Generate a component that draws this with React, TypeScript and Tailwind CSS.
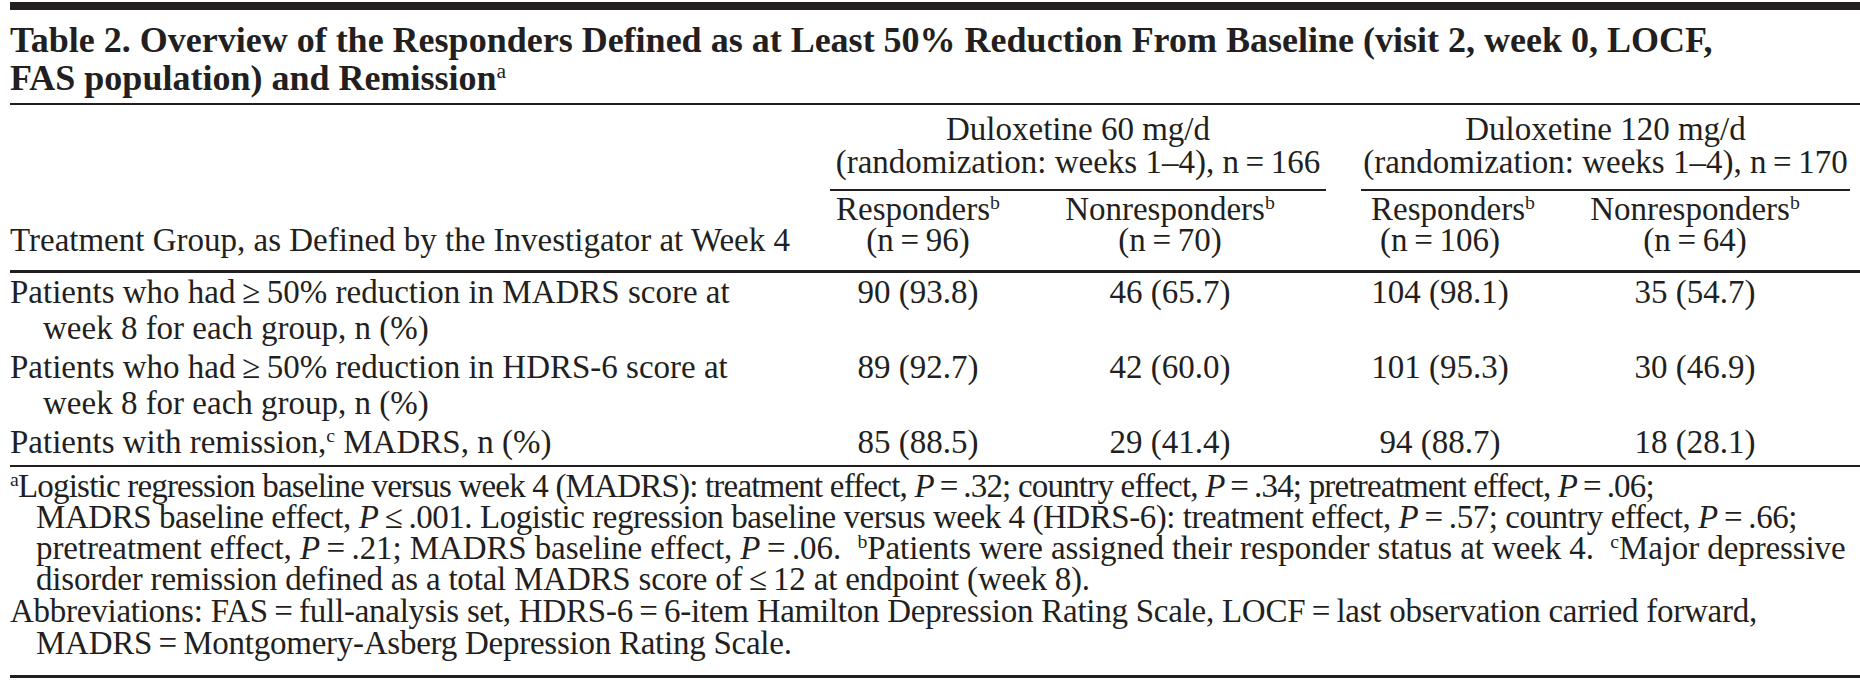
import React from 'react';

const TS = '\u2009';

interface Row {
  label: string[];
  sup?: string;
  values: string[];
}

const rows: Row[] = [
  {
    label: [`Patients who had${TS}≥${TS}50% reduction in MADRS score at`, 'week 8 for each group, n (%)'],
    values: ['90 (93.8)', '46 (65.7)', '104 (98.1)', '35 (54.7)'],
  },
  {
    label: [`Patients who had${TS}≥${TS}50% reduction in HDRS-6 score at`, 'week 8 for each group, n (%)'],
    values: ['89 (92.7)', '42 (60.0)', '101 (95.3)', '30 (46.9)'],
  },
  {
    label: ['Patients with remission,'],
    sup: 'c',
    values: ['85 (88.5)', '29 (41.4)', '94 (88.7)', '18 (28.1)'],
  },
];

const Sup: React.FC<{ children: React.ReactNode }> = ({ children }) => (
  <span className="relative -top-[0.55em] text-[0.6em] font-normal leading-none">{children}</span>
);

const Eq = () => <span>{TS}={TS}</span>;

const P: React.FC<{ v: string; op?: string }> = ({ v, op = '=' }) => (
  <>
    <i>P</i>
    {TS}{op}{TS}{v}
  </>
);

// label | resp 60 | nonresp 60 | gap | resp 120 | nonresp 120
const grid = 'grid grid-cols-[820px_180px_320px_31px_148px_351px]';

const App: React.FC = () => {
  return (
    <div
      className="w-[1860px] h-[700px] bg-white pl-[10px] text-[#231f20] overflow-hidden"
      style={{ fontFamily: '"Liberation Serif", "Times New Roman", serif' }}
    >
      {/* top rule */}
      <div className="mt-[2px] h-[8px] bg-[#231f20]" />

      {/* title */}
      <div className="pt-[11px] pb-[6px] text-[36px] leading-[38px] font-bold">
        <div>Table 2. Overview of the Responders Defined as at Least 50% Reduction From Baseline (visit 2, week 0, LOCF,</div>
        <div>
          FAS population) and Remission<Sup>a</Sup>
        </div>
      </div>
      <div className="h-[2px] bg-[#231f20]" />

      <div className="text-[33px]">
        {/* group header */}
        <div className={`${grid} pt-[8px] leading-[33px]`}>
          <div />
          <div className="col-span-2 text-center pr-[4px]">
            <div>Duloxetine 60 mg/d</div>
            <div>
              (randomization: weeks 1–4), n<Eq />166
            </div>
            <div className="mt-[10px] h-[2px] bg-[#231f20]" />
          </div>
          <div />
          <div className="col-span-2 text-center pr-[10px]">
            <div>Duloxetine 120 mg/d</div>
            <div>
              (randomization: weeks 1–4), n<Eq />170
            </div>
            <div className="mt-[10px] h-[2px] bg-[#231f20]" />
          </div>
        </div>

        {/* column header */}
        <div className={`${grid} pt-[3px] pb-[14px] leading-[31px]`}>
          <div className="flex items-end">Treatment Group, as Defined by the Investigator at Week 4</div>
          <div className="text-center pr-[4px]">
            <div>Responders<Sup>b</Sup></div>
            <div>(n<Eq />96)</div>
          </div>
          <div className="text-center">
            <div>Nonresponders<Sup>b</Sup></div>
            <div>(n<Eq />70)</div>
          </div>
          <div />
          <div className="text-center pl-[10px]">
            <div>Responders<Sup>b</Sup></div>
            <div>(n<Eq />106)</div>
          </div>
          <div className="text-center pl-[21px]">
            <div>Nonresponders<Sup>b</Sup></div>
            <div>(n<Eq />64)</div>
          </div>
        </div>
        <div className="h-[3px] bg-[#231f20]" />

        {/* body */}
        <div className="pt-[1px] pb-[5px] leading-[36px]">
          {rows.map((row, i) => (
            <div key={i} className={`${grid} ${i < rows.length - 1 ? 'pb-[3px]' : ''}`}>
              <div>
                {row.label.map((line, j) => (
                  <div key={j} className={j > 0 ? 'pl-[33px]' : ''}>
                    {line}
                    {row.sup && (
                      <>
                        <Sup>{row.sup}</Sup> MADRS, n (%)
                      </>
                    )}
                  </div>
                ))}
              </div>
              <div className="text-center pr-[4px]">{row.values[0]}</div>
              <div className="text-center">{row.values[1]}</div>
              <div />
              <div className="text-center pl-[10px]">{row.values[2]}</div>
              <div className="text-center pl-[21px]">{row.values[3]}</div>
            </div>
          ))}
        </div>
        <div className="h-[2px] bg-[#231f20]" />

        {/* footnotes */}
        <div className="pt-[4px] leading-[31px] whitespace-nowrap">
          <div className="tracking-[-0.8px]">
            <Sup>a</Sup>Logistic regression baseline versus week 4 (MADRS): treatment effect, <P v=".32" />; country effect, <P v=".34" />; pretreatment effect, <P v=".06" />;
          </div>
          <div className="pl-[26px] tracking-[-0.45px]">
            MADRS baseline effect, <P v=".001" op="≤" />. Logistic regression baseline versus week 4 (HDRS-6): treatment effect, <P v=".57" />; country effect, <P v=".66" />;
          </div>
          <div className="pl-[26px] tracking-[-0.1px]">
            pretreatment effect, <P v=".21" />; MADRS baseline effect, <P v=".06" />.{'\u2002'}<Sup>b</Sup>Patients were assigned their responder status at week 4.{'\u2002'}<Sup>c</Sup>Major depressive
          </div>
          <div className="pl-[26px] tracking-[-0.2px]">
            disorder remission defined as a total MADRS score of{TS}≤{TS}12 at endpoint (week 8).
          </div>
          <div className="pt-[1px] tracking-[-0.25px]">
            Abbreviations: FAS<Eq />full-analysis set, HDRS-6<Eq />6-item Hamilton Depression Rating Scale, LOCF<Eq />last observation carried forward,
          </div>
          <div className="pt-[1px] pl-[26px] tracking-[-0.25px]">
            MADRS<Eq />Montgomery-Asberg Depression Rating Scale.
          </div>
        </div>
        <div className="mt-[16px] h-[3px] bg-[#231f20]" />
      </div>
    </div>
  );
};

export default App;
